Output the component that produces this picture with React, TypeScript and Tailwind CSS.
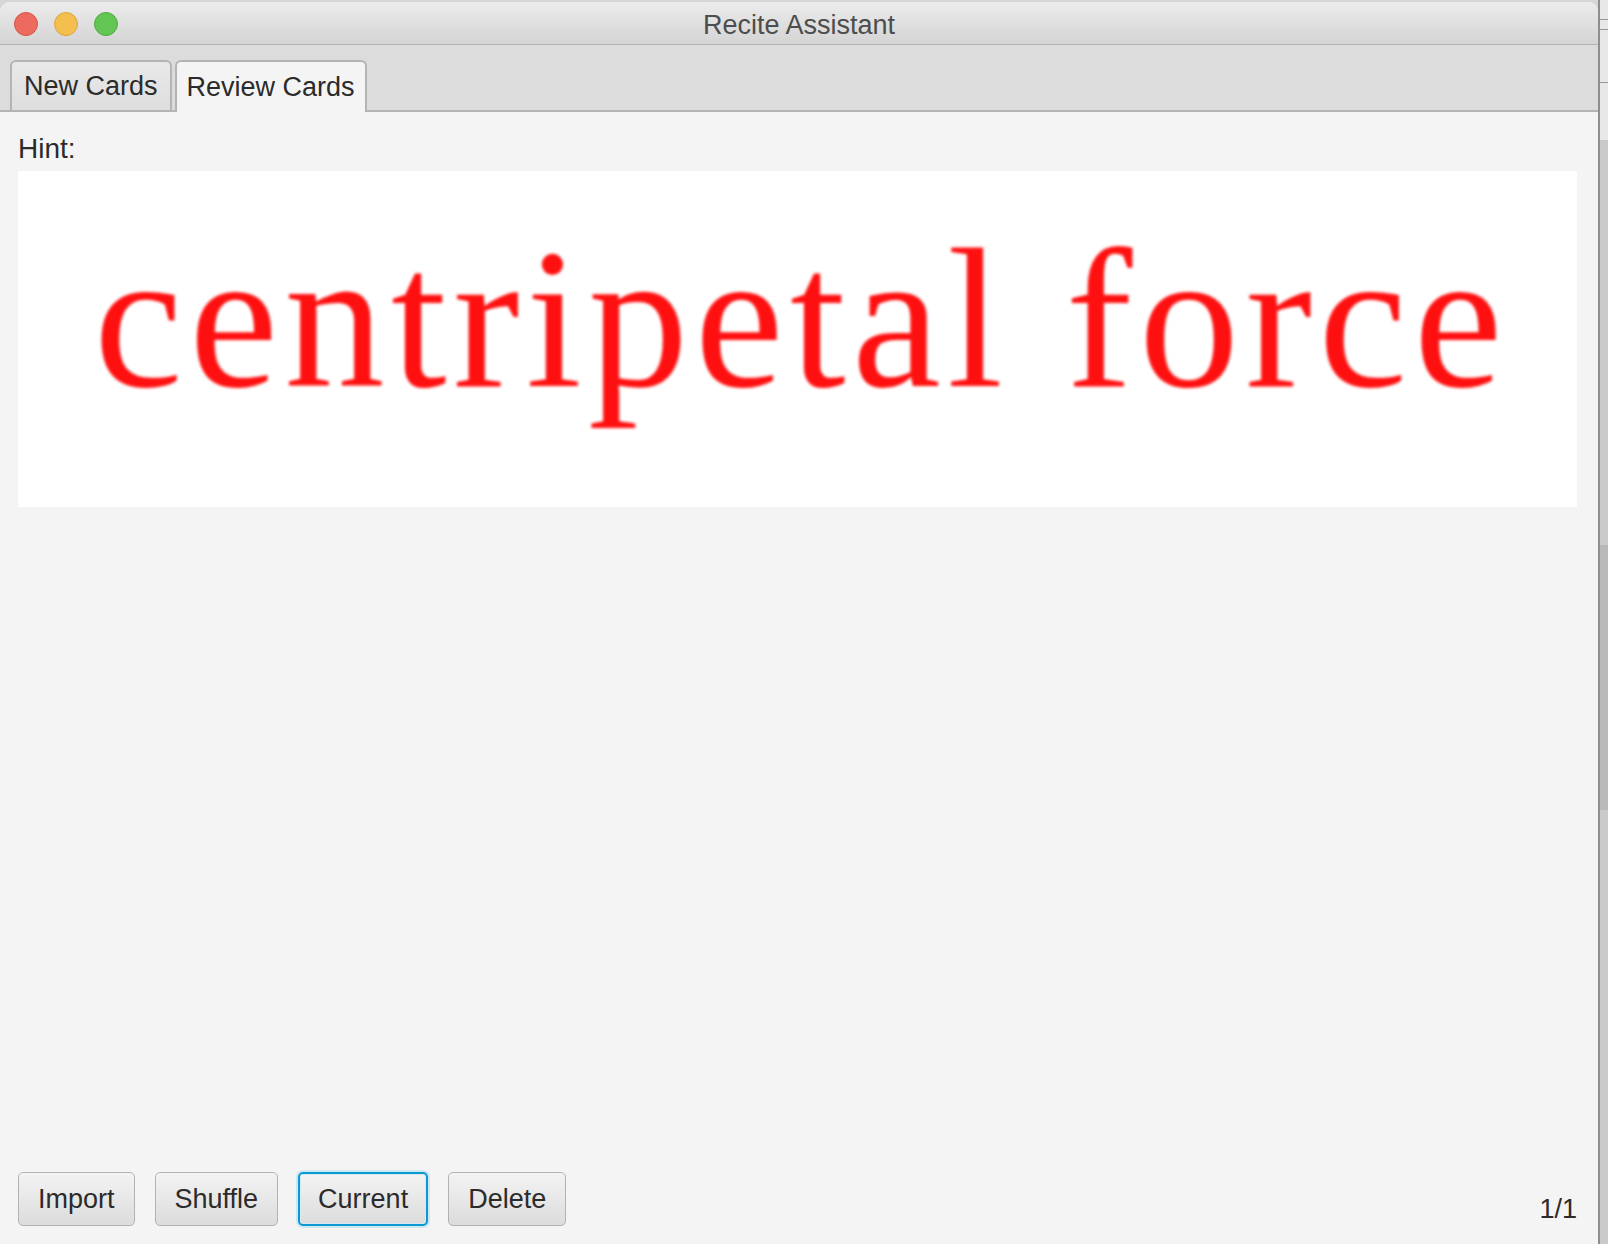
import React from "react";

const sans = { fontFamily: '"Liberation Sans", Arial, sans-serif' };

function Btn({ label, focused }: { label: string; focused?: boolean }) {
  return (
    <button
      className={
        focused
          ? "h-[54px] px-[18px] rounded-[5px] border-2 border-[#0a9ad2] bg-gradient-to-b from-[#f3f3f3] to-[#dcdcdc] text-[27px] leading-none text-[#2b2b2b] shadow-[0_0_0_2px_#cfe7f3,inset_0_0_0_1px_#d9e9f1]"
          : "h-[54px] px-[19px] rounded-[5px] border border-[#b2b2b2] bg-gradient-to-b from-[#f3f3f3] to-[#dcdcdc] text-[27px] leading-none text-[#2b2b2b]"
      }
      style={sans}
    >
      {label}
    </button>
  );
}

export default function App() {
  return (
    <div className="w-[1608px] h-[1244px] overflow-hidden bg-[#d6d6d6] flex" style={sans}>
      {/* main window */}
      <div className="w-[1598px] mt-[2px] flex flex-col rounded-t-[10px] overflow-hidden bg-[#f4f4f4]">
        {/* title bar */}
        <div className="relative h-[43px] shrink-0 bg-gradient-to-b from-[#ececec] to-[#d4d4d4] border-b border-[#b3b3b3] flex items-center justify-center">
          <div className="absolute left-[14px] top-[10px] flex gap-[16px]">
            <div className="w-[24px] h-[24px] rounded-full bg-[#ec6a5e] border border-[#d65548]" />
            <div className="w-[24px] h-[24px] rounded-full bg-[#f4bf4f] border border-[#dea43a]" />
            <div className="w-[24px] h-[24px] rounded-full bg-[#62c554] border border-[#50ad40]" />
          </div>
          <span className="text-[27px] text-[#4d4d4d] mt-[4px]">Recite Assistant</span>
        </div>
        {/* tab header */}
        <div className="h-[67px] shrink-0 bg-[#dcdcdc] border-b-2 border-[#b4b4b4] flex items-end pl-[10px] gap-[3px]">
          <div className="h-[52px] -mb-[2px] px-[12px] rounded-t-[6px] border-2 border-[#b4b4b4] bg-gradient-to-b from-[#e9e9e9] to-[#dedede] flex items-center text-[27px] text-[#2b2b2b]">
            New Cards
          </div>
          <div className="h-[52px] -mb-[2px] px-[10px] rounded-t-[6px] border-2 border-b-0 border-[#b4b4b4] bg-[#f4f4f4] flex items-center text-[27px] text-[#2b2b2b]">
            Review Cards
          </div>
        </div>
        {/* content */}
        <div className="flex-1 flex flex-col pl-[18px] pr-[21px] pt-[22px] pb-[18px]">
          <div className="text-[28px] leading-[30px] text-[#2b2b2b] mb-[7px]">Hint:</div>
          <div className="h-[336px] bg-white overflow-hidden flex justify-center">
            <div
              className="pt-[48px] pl-[8px] text-[200px] leading-[200px] text-[#ff1010] tracking-[6.5px] whitespace-nowrap blur-[1.4px]"
              style={{ fontFamily: '"Liberation Serif", "Times New Roman", serif' }}
            >
              centripetal force
            </div>
          </div>
          <div className="flex-1" />
          <div className="flex items-end justify-between">
            <div className="flex gap-[20px]">
              <Btn label="Import" />
              <Btn label="Shuffle" />
              <Btn label="Current" focused />
              <Btn label="Delete" />
            </div>
            <span className="text-[27px] leading-[30px] text-[#2b2b2b] mb-[2px]">1/1</span>
          </div>
        </div>
      </div>
      {/* sliver of the window behind */}
      <div className="flex-1 flex flex-col border-l-2 border-[#8e8e8e]">
        <div className="h-[140px] bg-[#e8e8e8] flex flex-col">
          <div className="h-[19px]" />
          <div className="h-px bg-[#9a9a9a]" />
          <div className="h-[9px]" />
          <div className="h-px bg-[#9a9a9a]" />
          <div className="h-[52px]" />
          <div className="h-px bg-[#9a9a9a]" />
        </div>
        <div className="h-[405px] bg-[#cacaca]" />
        <div className="h-[265px] bg-[#b9b9b9]" />
        <div className="flex-1 bg-[#cacaca]" />
      </div>
    </div>
  );
}
